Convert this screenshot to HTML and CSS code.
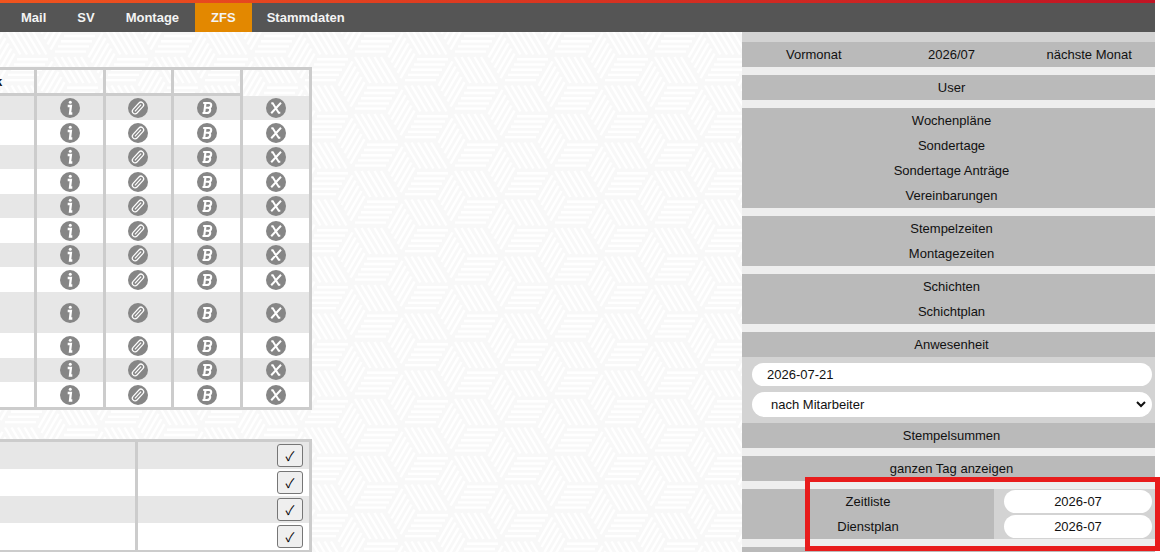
FILE: index.html
```html
<!DOCTYPE html>
<html lang="de">
<head>
  <meta charset="UTF-8">
  <title>ZFS</title>
  <link rel="stylesheet" href="styles.css">
</head>
<body>

  <!-- Icons -->
  <svg class="sprite" aria-hidden="true">
    <symbol id="icon-info" viewBox="0 0 20 20">
      <circle cx="10" cy="10" r="10" fill="#868686"/>
      <circle cx="10.300" cy="4.300" r="1.500" fill="#fff"/>
      <path d="M7.700 8h3.200l-.900 7.500h2.300" fill="none" stroke="#fff" stroke-width="2.300"/>
    </symbol>
    <symbol id="icon-clip" viewBox="0 0 20 20">
      <circle cx="10" cy="10" r="10" fill="#868686"/>
      <g fill="none" stroke="#fff" stroke-width="1.200" transform="rotate(-47 10 10)">
        <rect x="3" y="7.300" width="14" height="5.400" rx="2.700"/>
        <path d="M5.500 10h9"/>
      </g>
    </symbol>
    <symbol id="icon-bold" viewBox="0 0 20 20">
      <circle cx="10" cy="10" r="10" fill="#868686"/>
      <path d="M6.200 5h5.800c3.200 0 2.800 4.600-.500 4.800H8M11 9.800c3.600.200 2.500 5.200-1.200 5.200H5.500M8.500 5L7.200 15" fill="none" stroke="#fff" stroke-width="2.100"/>
    </symbol>
    <symbol id="icon-delete" viewBox="0 0 20 20">
      <circle cx="10" cy="10" r="10" fill="#868686"/>
      <path d="M5.300 5.300h1.400l6 9.500h1.600M15 4.700L5.200 15.300" fill="none" stroke="#fff" stroke-width="2"/>
    </symbol>
  </svg>

  <div class="top-line"></div>
  <nav class="main-nav">
    <a href="#">Mail</a>
    <a href="#">SV</a>
    <a href="#">Montage</a>
    <a href="#" class="active">ZFS</a>
    <a href="#">Stammdaten</a>
  </nav>

  <div class="page">
    <main class="content">
      <table class="list">
        <thead>
          <tr><th class="name">k</th><th></th><th></th><th></th><th class="last"></th></tr>
        </thead>
        <tbody id="entries"></tbody>
      </table>

      <table class="list confirm-list">
        <tbody id="confirmations"></tbody>
      </table>
    </main>

    <aside class="sidebar">
      <div class="group months">
        <a href="#">Vormonat</a>
        <a href="#">2026/07</a>
        <a href="#">nächste Monat</a>
      </div>
      <div class="group">
        <a href="#">User</a>
      </div>
      <div class="group">
        <a href="#">Wochenpläne</a>
        <a href="#">Sondertage</a>
        <a href="#">Sondertage Anträge</a>
        <a href="#">Vereinbarungen</a>
      </div>
      <div class="group">
        <a href="#">Stempelzeiten</a>
        <a href="#">Montagezeiten</a>
      </div>
      <div class="group">
        <a href="#">Schichten</a>
        <a href="#">Schichtplan</a>
      </div>
      <div class="group">
        <a href="#">Anwesenheit</a>
        <div class="filter">
          <input type="text" value="2026-07-21" aria-label="Datum">
          <select aria-label="Anzeige">
            <option>nach Mitarbeiter</option>
          </select>
        </div>
        <a href="#">Stempelsummen</a>
      </div>
      <div class="group">
        <a href="#">ganzen Tag anzeigen</a>
      </div>
      <div class="group reports">
        <div class="report">
          <a href="#" id="zeitliste">Zeitliste</a>
          <input type="text" value="2026-07" aria-labelledby="zeitliste">
        </div>
        <div class="report">
          <a href="#" id="dienstplan">Dienstplan</a>
          <input type="text" value="2026-07" aria-labelledby="dienstplan">
        </div>
        <div class="marker"></div>
      </div>
      <div class="group rest"></div>
    </aside>
  </div>

  <script>
    const actions = [
      ["info", "Info"],
      ["clip", "Anhang"],
      ["bold", "Buchung"],
      ["delete", "Löschen"]
    ];

    function icon(name, label) {
      return `<td><a href="#" aria-label="${label}"><svg class="icon"><use href="#icon-${name}"/></svg></a></td>`;
    }

    let rows = "";
    for (let i = 0; i < 12; i++) {
      rows += `<tr${i === 8 ? ' class="tall"' : ""}><td></td>${actions.map(a => icon(a[0], a[1])).join("")}</tr>`;
    }
    document.getElementById("entries").innerHTML = rows;

    document.getElementById("confirmations").innerHTML =
      '<tr><td class="name"></td><td><button type="button">✓</button></td></tr>'.repeat(4);
  </script>
</body>
</html>
```
FILE: styles.css
```css
* {
  box-sizing: border-box;
}
body {
  margin: 0;
  padding-right: 6px;
  height: 100vh;
  overflow: hidden;
  background: white;
  font-family: "Liberation Sans", Arial, sans-serif;
  font-size: 13px;
  color: #111;
}
a {
  color: inherit;
  text-decoration: none;
}
.sprite {
  display: none;
}
.top-line {
  height: 3px;
  background: linear-gradient(to right, #f0541e, #c01424);
}
.main-nav {
  display: flex;
  height: 29px;
  padding-left: 6px;
  background: #555;
}
.main-nav a {
  padding: 0 16px 0 15px;
  line-height: 29px;
  font-weight: bold;
  color: #f4f4f4;
}
.main-nav .active {
  padding: 0 16px;
  background: #e38800;
}
.page {
  display: flex;
}
.content {
  flex: 1;
  padding-top: 35px;
  background: #f8f8f8 url("data:image/svg+xml,%3Csvg xmlns='http://www.w3.org/2000/svg' xmlns:xlink='http://www.w3.org/1999/xlink' width='100' height='57' viewBox='0 0 100 57'%3E%3Cdefs%3E%3Cg id='h' stroke='white' stroke-width='2.4'%3E%3Cpath d='M-1 3.800h31M-4 9h31M-7 14.200h31M-10 19.400h31M-13 24.600h31'/%3E%3Cpath d='M-13-27L2.500-1M-6.500-27L9-1M0-27L15.500-1M6.500-27L22-1M13-27L28.500-1'/%3E%3Cpath d='M-29.500 1.800L-15.500-22.600M-26.500 7L-12.500-17.400M-23.500 12.200L-9.500-12.200M-20.500 17.400L-6.500-7M-17.500 22.600L-3.500-1.800'/%3E%3C/g%3E%3C/defs%3E%3Cuse xlink:href='%23h' x='0' y='0'/%3E%3Cuse xlink:href='%23h' x='100' y='0'/%3E%3Cuse xlink:href='%23h' x='0' y='57'/%3E%3Cuse xlink:href='%23h' x='100' y='57'/%3E%3Cuse xlink:href='%23h' x='50' y='28.500'/%3E%3C/svg%3E") 68px 52px;
}

/* tables */
.list {
  width: 312px;
  table-layout: fixed;
  border-spacing: 0;
  border: 3px solid #ccc;
  border-left: none;
}
.list th,
.list td {
  height: 24px;
  padding: 0;
  border-right: 3px solid #ccc;
  text-align: center;
  line-height: 0;
}
.list th:last-child,
.list td:last-child {
  border-right: none;
}
.list th {
  height: 26px;
  border-bottom: 3px solid #ccc;
}
.list th.name {
  width: 37px;
  text-align: left;
  text-indent: -5px;
  line-height: 22px;
}
.list th.last {
  width: 66px;
  border-bottom: none;
}
.list tbody tr {
  background: white;
}
.list tbody tr:nth-child(odd) {
  background: #e7e7e7;
}
.list tbody tr:nth-child(even) td {
  height: 25px;
}
.list tbody .tall td {
  height: 41px;
}
.icon {
  width: 20px;
  height: 20px;
}
.confirm-list {
  margin-top: 29px;
}
.confirm-list tbody tr td,
.confirm-list tbody tr:nth-child(even) td {
  height: 27px;
  padding-right: 6px;
  text-align: right;
}
.confirm-list .name {
  width: 138px;
}
.confirm-list button {
  width: 26px;
  height: 23px;
  padding: 0;
  border: 1px solid #767676;
  border-radius: 3px;
  background: #efefef;
  font-family: "Noto Sans CJK JP", "DejaVu Sans", sans-serif;
  font-size: 13px;
}

/* sidebar */
.sidebar {
  width: 413px;
  padding-top: 10px;
  background: #d3d3d3;
}
.group {
  border-bottom: 8px solid #eee;
}
.group a {
  display: block;
  padding-left: 6px;
  background: #bababa;
  line-height: 25px;
  text-align: center;
}
.months {
  display: grid;
  grid-template-columns: 1fr 1fr 1fr;
}
.filter {
  display: grid;
  gap: 6px;
  padding: 6px 3px 6px 10px;
}
.sidebar input,
.sidebar select {
  min-width: 0;
  height: 23px;
  padding: 0 15px;
  border: none;
  border-radius: 13px;
  background: white;
  font: inherit;
  color: #111;
}
.sidebar select {
  height: 25px;
  padding: 0 0 0 15px;
  border-right: 3px solid white;
}
.reports {
  position: relative;
}
.report {
  display: grid;
  grid-template-columns: 252px 1fr;
}
.report a {
  padding-left: 0;
}
.report input {
  margin: 1px 3px 1px 10px;
  text-align: center;
}
.marker {
  position: absolute;
  top: -12px;
  right: -5px;
  bottom: -12px;
  left: 63px;
  border: 5px solid #e81c1c;
}
.rest {
  height: 25px;
  border-bottom: none;
  background: #bababa;
}
```
